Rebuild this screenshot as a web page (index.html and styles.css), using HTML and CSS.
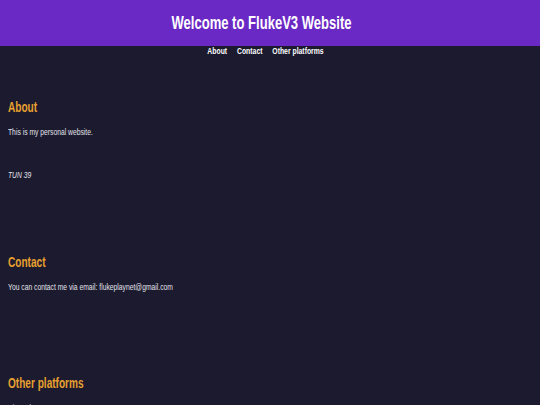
FILE: index.html
```html
<!DOCTYPE html>
<html>
<head>
<meta charset="utf-8">
<link rel="stylesheet" href="styles.css">
</head>
<body>
<header class="site-header">
  <h1 class="title">Welcome to FlukeV3 Website</h1>
</header>
<nav class="nav">
  <div class="nav-list">
    <a href="#about">About</a>
    <a href="#contact">Contact</a>
    <a href="#other">Other platforms</a>
  </div>
</nav>
<main class="content">
  <section class="section section-about" id="about">
    <h2 class="heading">About</h2>
    <p class="text">This is my personal website.</p>
    <p class="text note">TUN 39</p>
  </section>
  <section class="section section-contact" id="contact">
    <h2 class="heading">Contact</h2>
    <p class="text">You can contact me via email: flukeplaynet@gmail.com</p>
  </section>
  <section class="section section-other" id="other">
    <h2 class="heading">Other platforms</h2>
    <p class="text">Discord</p>
  </section>
</main>
</body>
</html>
```
FILE: styles.css
```css
html, body {
  margin: 0;
  padding: 0;
}
body {
  background: #1c1a2e;
  color: #e2e2ea;
  font-family: "Liberation Sans", Arial, sans-serif;
}
.site-header {
  background: #6a28c4;
  height: 46px;
  box-sizing: border-box;
  padding: 12px 17px 0 0;
}
.title {
  margin: 0;
  color: #ffffff;
  font-size: 19px;
  line-height: 22px;
  font-weight: bold;
  text-align: center;
  transform: scaleX(0.687);
}
.nav {
  display: flex;
  justify-content: center;
  align-items: center;
  padding-right: 9px;
  height: 10px;
}
.nav-list {
  display: flex;
  gap: 13px;
  line-height: 10px;
  transform: scaleX(0.76);
}
.nav a {
  color: #ffffff;
  text-decoration: none;
  font-weight: bold;
  font-size: 9px;
  line-height: 10px;
}
.content {
  padding: 0 8px;
}
.section-about {
  padding-top: 43px;
}
.section-contact {
  padding-top: 73px;
}
.section-other {
  padding-top: 82px;
}
.heading {
  margin: 0;
  color: #e8a030;
  font-size: 14px;
  line-height: 16px;
  font-weight: bold;
  transform: scaleX(0.72);
  transform-origin: left center;
}
.text {
  margin: 11px 0 0;
  font-size: 9px;
  line-height: 12px;
  transform: scaleX(0.75);
  transform-origin: left center;
}
.note {
  font-style: italic;
  margin-top: 31px;
}
```
